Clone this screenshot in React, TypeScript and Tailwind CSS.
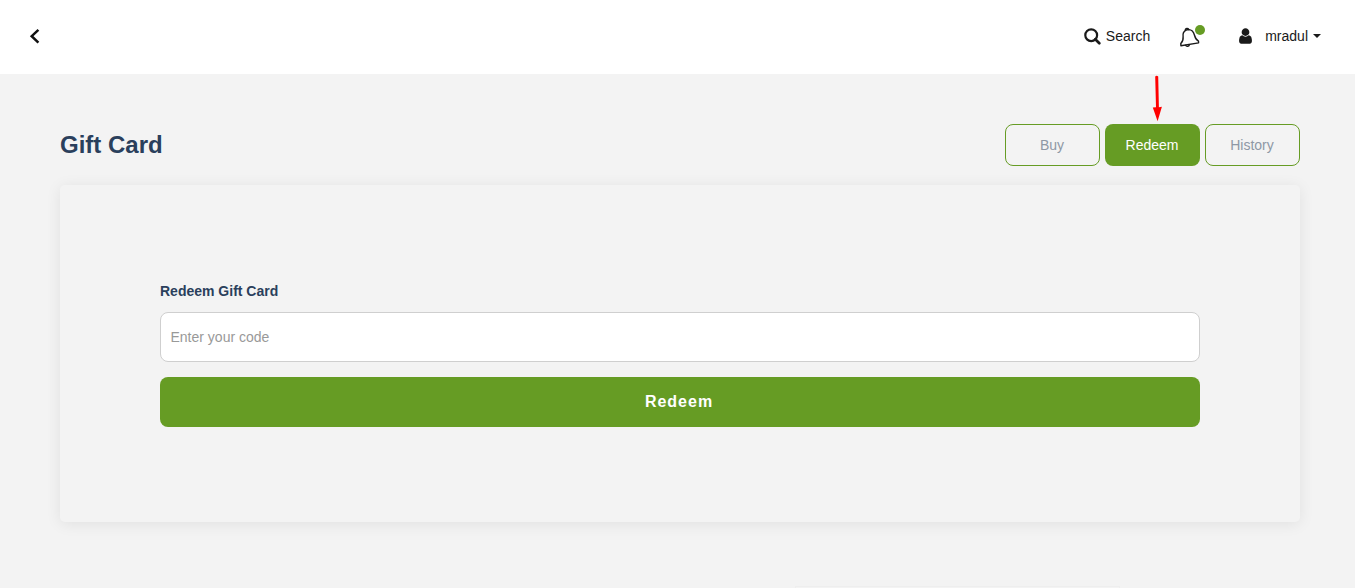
function SearchIcon() {
  return (
    <svg className="h-[18px] w-[17px]" viewBox="0 0 17 18" fill="none" stroke="#1a1a1a">
      <circle cx="7.2" cy="8.2" r="5.9" strokeWidth="2.2" />
      <path d="M11.3 12.3L15.3 16.3" strokeWidth="2.7" strokeLinecap="round" />
    </svg>
  );
}

function UserIcon() {
  return (
    <svg className="h-[18px] w-[13px]" viewBox="0 0 1280 1792" fill="#1a1a1a">
      <path d="M1280 1399q0 109-62.5 187t-150.5 78H213q-88 0-150.5-78T0 1399q0-85 8.5-160.5t31.5-152 58.5-131 94-89T327 832q131 128 313 128t313-128q76 0 134.5 34.5t94 89 58.5 131 31.5 152 8.5 160.5zm-256-887q0 159-112.5 271.5T640 896 368.5 783.5 256 512t112.5-271.5T640 128t271.5 112.5T1024 512z" />
    </svg>
  );
}

function BellIcon() {
  return (
    <svg className="h-[22px] w-[22px]" viewBox="0 0 22 22" fill="none" stroke="#1a1a1a" strokeWidth="1.4" strokeLinejoin="round" strokeLinecap="round">
      <path d="M8.1 4.2C5.4 5.5 4.7 8 5.1 10.7C5.4 13.6 4.8 15.5 2.8 17.5L2.9 19.7L20.6 16.9L20.5 15.2C18 13.9 17.2 12 16.5 9.3C15.6 5.7 12.9 3.3 9.7 3.7Z" />
      <path d="M7.4 4.1C7.4 2.5 9.8 2.1 10.8 3.6" strokeWidth="1.7" />
      <path d="M7.6 19.3C8.4 21 10.9 20.6 11.4 18.7" />
    </svg>
  );
}

function Header() {
  return (
    <header className="flex h-[74px] items-start justify-between bg-white text-[14px] leading-5 text-[#1a1a1a]">
      <button type="button" aria-label="Back" className="ml-[29px] mt-[28px]">
        <svg className="h-4 w-3" viewBox="0 0 12 16" fill="none" stroke="#111" strokeWidth="2.5">
          <path d="M9.4 1.8L2.7 8.2L9.4 14.6" />
        </svg>
      </button>
      <nav className="flex pr-[34px] pt-[26px]">
        <a className="flex gap-[5px]">
          <span className="pt-px"><SearchIcon /></span>
          <span>Search</span>
        </a>
        <div className="relative ml-[28px]">
          <BellIcon />
          <span className="absolute left-[17px] top-[-1px] h-[10px] w-[10px] rounded-full bg-[#669c24]" />
        </div>
        <a className="ml-[39px] flex">
          <span className="pt-px"><UserIcon /></span>
          <span className="ml-[13px]">mradul</span>
          <svg className="ml-[5px] mt-[8px] h-1 w-2" viewBox="0 0 8 4" fill="#1a1a1a">
            <path d="M0 0H8L4 4Z" />
          </svg>
        </a>
      </nav>
    </header>
  );
}

export default function App() {
  return (
    <div className="h-[588px] overflow-hidden bg-[#f3f3f3] font-['Liberation_Sans',Arial,sans-serif]">
      <Header />
      <main className="pl-[60px] pr-[55px] pt-[50px]">
        <div className="flex h-[42px] items-center justify-between">
          <h1 className="text-[24px] font-bold leading-[42px] text-[#2a3f5c]">Gift Card</h1>
          <div className="relative flex gap-[5px] text-[14px] text-[#8e98a5]">
            <button type="button" className="h-[42px] w-[95px] rounded-lg border border-[#669c24] pr-px">Buy</button>
            <button type="button" className="h-[42px] w-[95px] rounded-lg bg-[#669c24] pr-px text-white">Redeem</button>
            <button type="button" className="h-[42px] w-[95px] rounded-lg border border-[#669c24] pr-px">History</button>
            <svg className="absolute left-[147px] top-[-49px] h-[47px] w-[11px]" viewBox="0 0 11 47" fill="#ff0000">
              <path d="M3.2 1.5Q4.7 -0.2 6.2 1.5L6.9 32.3L9.9 31.8L5.6 46.2L0.8 32.5L4 32.2Z" />
            </svg>
          </div>
        </div>
        <section className="mt-[19px] h-[337px] rounded-[5px] px-[100px] pt-[96px] shadow-[0_2px_15px_rgba(0,0,0,0.08)]">
          <label htmlFor="code" className="block text-[14px] font-bold leading-5 text-[#2a3f5c]">Redeem Gift Card</label>
          <input
            id="code"
            placeholder="Enter your code"
            className="mt-[11px] block h-[50px] w-full rounded-lg border border-[#cfcfcf] bg-white px-[9.5px] text-[14px] placeholder:text-[#999]"
          />
          <button type="button" className="mt-[15px] block h-[50px] w-full rounded-lg bg-[#669c24] pb-px pr-[2px] text-[16px] font-bold tracking-[1px] text-white">Redeem</button>
        </section>
        <div className="ml-[735px] mt-[64px] h-8 w-[325px] border border-[#eeeeee]" />
      </main>
    </div>
  );
}
